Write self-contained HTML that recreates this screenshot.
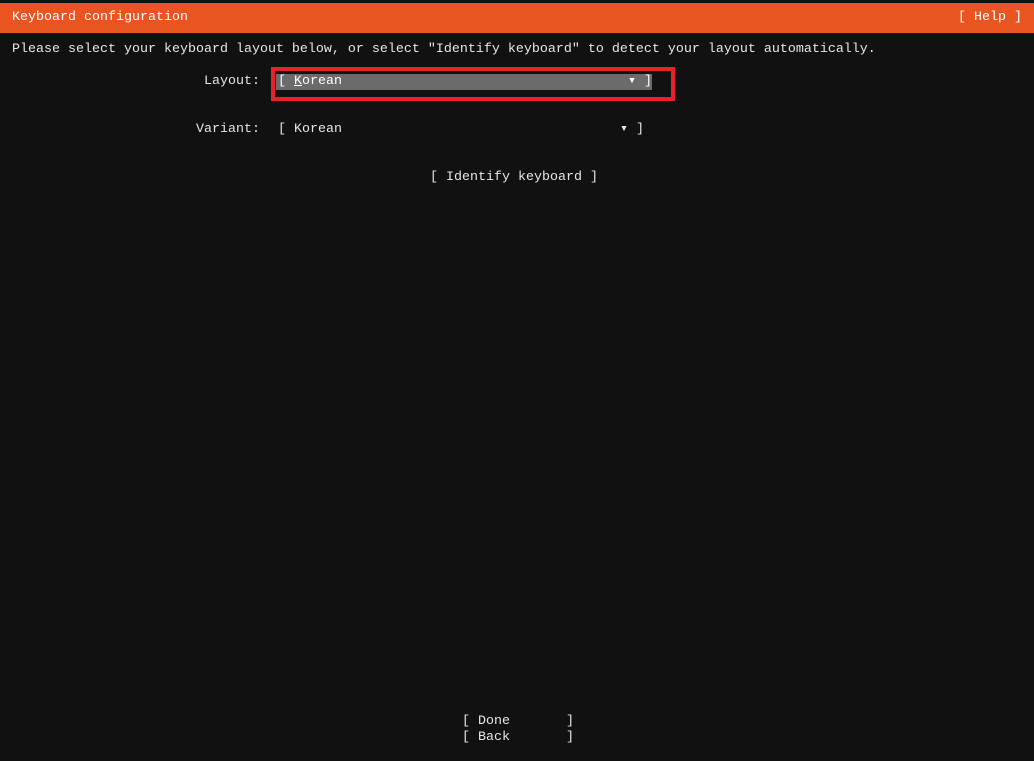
<!DOCTYPE html>
<html><head><meta charset="utf-8"><style>
html,body{margin:0;padding:0;background:#111111;width:1034px;height:761px;overflow:hidden}
body{position:relative;font-family:"Liberation Mono","DejaVu Sans Mono",monospace;font-size:13.33px;color:#e6e6e6}
.t{position:absolute;white-space:pre;line-height:16px;height:16px}
#hdr{position:absolute;left:0;top:3px;width:1034px;height:30px;background:#e95420}
#box{position:absolute;left:271px;top:67px;width:396px;height:26px;border:4px solid #e8212b}
#hl{position:absolute;left:276px;top:74px;width:376px;height:16px;background:#6b6b6b}
u{text-decoration:underline}
</style></head><body>
<div id="hdr"></div>
<div class="t" style="left:12px;top:10px;color:#fff">Keyboard configuration</div>
<div class="t" style="left:958px;top:10px;color:#fff">[ Help ]</div>
<div class="t" style="left:12px;top:42px">Please select your keyboard layout below, or select "Identify keyboard" to detect your layout automatically.</div>
<div class="t" style="left:204px;top:74px">Layout:</div>
<div id="box"></div>
<div id="hl"></div>
<div class="t" style="left:278px;top:74px;color:#fff">[ <u>K</u>orean</div>
<div class="t" style="left:628px;top:74px;color:#fff">▾ ]</div>
<div class="t" style="left:196px;top:122px">Variant:</div>
<div class="t" style="left:278px;top:122px">[ Korean</div>
<div class="t" style="left:620px;top:122px">▾ ]</div>
<div class="t" style="left:430px;top:170px">[ Identify keyboard ]</div>
<div class="t" style="left:462px;top:714px">[ Done       ]</div>
<div class="t" style="left:462px;top:730px">[ Back       ]</div>
</body></html>
